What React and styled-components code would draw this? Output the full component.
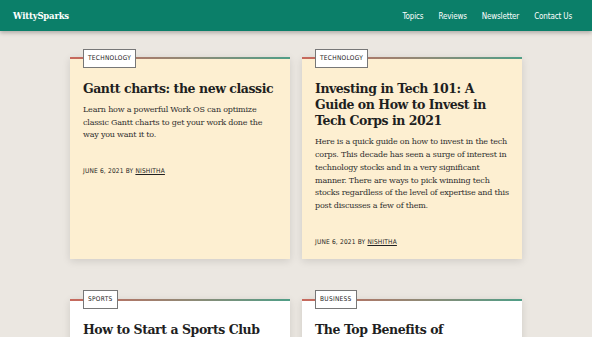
import React from 'react';
import styled, { createGlobalStyle, css } from 'styled-components';

const GlobalStyle = createGlobalStyle`
  body {
    margin: 0;
    background: #ebe7e1;
    font-family: 'DejaVu Serif', 'Liberation Serif', serif;
  }
`;

const condensed = css`
  font-family: 'Liberation Sans Narrow', 'DejaVu Sans Condensed', 'Liberation Sans', sans-serif;
  font-stretch: condensed;
`;

const Header = styled.header`
  display: flex;
  justify-content: space-between;
  align-items: center;
  height: 31px;
  padding: 0 20px 0 13px;
  background: #0b7f69;
  box-shadow: 0 2px 4px rgba(0, 0, 0, 0.25);
`;

const Logo = styled.a`
  color: #fff;
  font-size: 8.5px;
  font-weight: 700;
  letter-spacing: -0.2px;
  text-decoration: none;
`;

const Nav = styled.nav`
  display: flex;
  gap: 15px;
  padding-top: 1px;
`;

const NavLink = styled.a`
  ${condensed};
  color: #fff;
  font-size: 8px;
  letter-spacing: -0.15px;
  text-decoration: none;
`;

const Main = styled.main`
  display: grid;
  grid-template-columns: 220px 220px;
  column-gap: 12px;
  row-gap: 40px;
  width: 452px;
  margin: 0 auto;
  padding-top: 26px;
`;

const Card = styled.article`
  display: flex;
  flex-direction: column;
  align-items: flex-start;
  padding: 0 13px 13px;
  background: ${props => (props.light ? '#ffffff' : '#fdefd1')};
  border-top: 2px solid transparent;
  border-image: linear-gradient(90deg, #c8685c, #8f8a76 55%, #4f9e87) 1;
  box-shadow: 0 2px 8px rgba(0, 0, 0, 0.12);
`;

const Tag = styled.span`
  ${condensed};
  margin-top: -10.5px;
  padding: 5px 4px;
  background: #fff;
  border: 1px solid #777;
  color: #222;
  font-size: 6.5px;
  line-height: 7px;
  letter-spacing: 0.3px;
  text-transform: uppercase;
`;

const Title = styled.h2`
  margin: 13px 0 0;
  color: #1f1f1f;
  font-size: 12.5px;
  line-height: 16.3px;
  letter-spacing: -0.45px;
  font-weight: 700;
`;

const Excerpt = styled.p`
  margin: 7px 0 0;
  color: #2e2e2e;
  font-size: 8px;
  line-height: 12.7px;
  letter-spacing: -0.2px;
`;

const Meta = styled.div`
  ${condensed};
  margin-top: 25px;
  color: #222;
  font-size: 6.5px;
  letter-spacing: 0.2px;
  text-transform: uppercase;

  a {
    color: #222;
    text-decoration: underline;
  }
`;

const posts = [
  {
    tag: 'Technology',
    title: 'Gantt charts: the new classic',
    excerpt: 'Learn how a powerful Work OS can optimize classic Gantt charts to get your work done the way you want it to.',
  },
  {
    tag: 'Technology',
    title: 'Investing in Tech 101: A Guide on How to Invest in Tech Corps in 2021',
    excerpt: 'Here is a quick guide on how to invest in the tech corps. This decade has seen a surge of interest in technology stocks and in a very significant manner. There are ways to pick winning tech stocks regardless of the level of expertise and this post discusses a few of them.',
  },
  {
    tag: 'Sports',
    title: 'How to Start a Sports Club',
    excerpt: 'Starting a sports club takes planning, people and passion. Here is how to get yours off the ground.',
    light: true,
  },
  {
    tag: 'Business',
    title: 'The Top Benefits of Outsourcing Your Business Tasks',
    excerpt: 'Outsourcing can save time and money while letting you focus on what matters most.',
    light: true,
  },
];

const App = () => (
  <>
    <GlobalStyle />
    <Header>
      <Logo href="#">WittySparks</Logo>
      <Nav>
        <NavLink href="#">Topics</NavLink>
        <NavLink href="#">Reviews</NavLink>
        <NavLink href="#">Newsletter</NavLink>
        <NavLink href="#">Contact Us</NavLink>
      </Nav>
    </Header>
    <Main>
      {posts.map(post => (
        <Card key={post.title} light={post.light}>
          <Tag>{post.tag}</Tag>
          <Title>{post.title}</Title>
          <Excerpt>{post.excerpt}</Excerpt>
          <Meta>
            June 6, 2021 by <a href="#">Nishitha</a>
          </Meta>
        </Card>
      ))}
    </Main>
  </>
);

export default App;
